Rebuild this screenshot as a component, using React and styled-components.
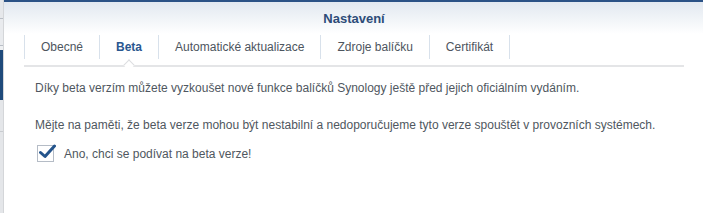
import React from 'react';
import styled, { createGlobalStyle } from 'styled-components';

const Global = createGlobalStyle`
  html, body { margin: 0; padding: 0; background: #fff; }
  body { font-family: "Liberation Sans", Arial, sans-serif; }
  #root { width: 703px; height: 213px; overflow: hidden; }
`;

const Page = styled.div`
  display: flex;
  width: 703px;
  height: 213px;
`;

const Backdrop = styled.div`
  width: 3px;
  flex: none;
  border-right: 1px solid #d4d6d9;
  background: linear-gradient(
    to bottom,
    #e6e8eb 0px, #e6e8eb 18px, #b9bec6 18px, #b9bec6 19px,
    #e9ebee 19px, #e9ebee 45px, #b9bec6 45px, #b9bec6 46px,
    #eef0f2 46px, #eef0f2 50px, #1f4a7b 50px, #1f4a7b 100px,
    #e4e6e9 100px, #e4e6e9 131px, #c9ccd0 131px, #c9ccd0 132px,
    #e4e6e9 132px
  );
`;

const Window = styled.div`
  flex: 1;
  display: flex;
  flex-direction: column;
  border-top: 2px solid #2b5286;
  background: #fff;
`;

const Header = styled.div`
  height: 32px;
  display: flex;
  align-items: center;
  justify-content: center;
  background: linear-gradient(to bottom, #e2e8f0 0%, #f3f6f9 60%, #ffffff 100%);
`;

const Title = styled.div`
  font-size: 13px;
  font-weight: bold;
  color: #2d4c78;
  margin-top: 1px;
  margin-left: 1px;
`;

const TabStrip = styled.div`
  position: relative;
  display: flex;
  margin: 0 19px 0 20px;
  padding: 1px 0 6px;
  border-bottom: 2px solid #e4e5e7;
`;

const Tab = styled.div`
  height: 24px;
  display: flex;
  align-items: center;
  padding: 0 16px;
  font-size: 12px;
  color: ${p => (p.$active ? '#2a5790' : '#4d555e')};
  font-weight: ${p => (p.$active ? 'bold' : 'normal')};
  border-left: ${p => (p.$first ? '1px solid #d8e1eb' : 'none')};
  border-right: 1px solid #d8e1eb;
  position: relative;
`;

const Notch = styled.span`
  position: absolute;
  left: 50%;
  bottom: -10px;
  width: 7px;
  height: 7px;
  margin-left: -4px;
  background: #fff;
  border-left: 1px solid #dcdde0;
  border-top: 1px solid #dcdde0;
  transform: rotate(45deg);
  z-index: 2;
`;

const Content = styled.div`
  padding: 14px 0 0 31px;
  font-size: 12px;
  color: #4f5760;
`;

const Para = styled.p`
  margin: 0 0 ${p => p.$gap || 0}px;
  line-height: 15px;
`;

const CheckRow = styled.label`
  display: flex;
  align-items: center;
  gap: 10px;
  margin-top: 12px;
  margin-left: 2px;
`;

const Box = styled.span`
  width: 15px;
  height: 15px;
  border: 1px solid #b5bcc6;
  background: #fff;
  position: relative;
  flex: none;
`;

const Tick = styled.svg`
  position: absolute;
  left: 1px;
  top: -2px;
`;

const tabs = ['Obecné', 'Beta', 'Automatické aktualizace', 'Zdroje balíčku', 'Certifikát'];

export default function App() {
  return (
    <>
      <Global />
      <Page>
        <Backdrop />
        <Window>
          <Header>
            <Title>Nastavení</Title>
          </Header>
          <TabStrip>
            {tabs.map((t, i) => (
              <Tab key={t} $first={i === 0} $active={t === 'Beta'}>
                {t}
                {t === 'Beta' && <Notch />}
              </Tab>
            ))}
          </TabStrip>
          <Content>
            <Para $gap={22}>
              Díky beta verzím můžete vyzkoušet nové funkce balíčků Synology ještě před jejich oficiálním vydáním.
            </Para>
            <Para>
              Mějte na paměti, že beta verze mohou být nestabilní a nedoporučujeme tyto verze spouštět v provozních systémech.
            </Para>
            <CheckRow>
              <Box>
                <Tick width="17" height="15" viewBox="0 0 17 15">
                  <path d="M1.5 8.5 L6 12.5 L15.5 2" fill="none" stroke="#24548c" strokeWidth="3" strokeLinecap="round" strokeLinejoin="round" />
                </Tick>
              </Box>
              <span>Ano, chci se podívat na beta verze!</span>
            </CheckRow>
          </Content>
        </Window>
      </Page>
    </>
  );
}
